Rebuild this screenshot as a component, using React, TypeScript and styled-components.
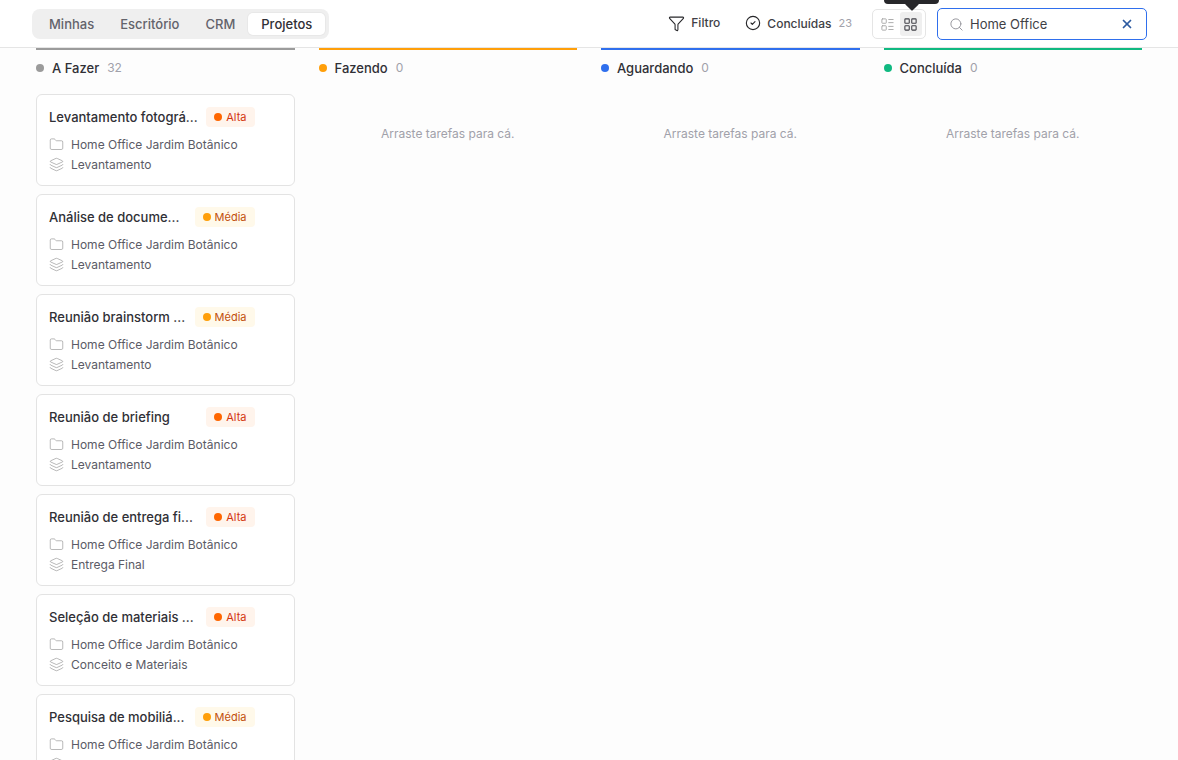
import { createGlobalStyle, styled } from 'styled-components';
import { CircleCheck, Folder, Funnel, Layers, LayoutGrid, LayoutList, Search, X } from 'lucide-react';

const Global = createGlobalStyle`
  html, body { margin: 0; padding: 0; height: 100%; overflow: hidden; background: #fdfdfd; }
  body { font-family: Inter, "Noto Sans", sans-serif; color: #27272a; }
  * { box-sizing: border-box; }
`;

const Page = styled.div`
  height: 760px;
  overflow: hidden;
  display: flex;
  flex-direction: column;
`;

const Header = styled.header`
  height: 48px;
  flex: none;
  display: flex;
  align-items: flex-start;
  padding: 8px 31px 0 32px;
  background: #fff;
  border-bottom: 1px solid #e5e5e5;
`;

const Tabs = styled.div`
  display: flex;
  align-items: center;
  height: 30px;
  margin-top: 1px;
  padding: 0 4px;
  border-radius: 8px;
  background: #efefef;
`;

const Tab = styled.div<{ $active?: boolean }>`
  height: 22px;
  padding: 0 13px;
  display: flex;
  align-items: center;
  border-radius: 5px;
  font-size: 13px;
  font-weight: 500;
  color: ${(p) => (p.$active ? '#303036' : '#63636b')};
  background: ${(p) => (p.$active ? '#fff' : 'transparent')};
  box-shadow: ${(p) => (p.$active ? '0 0 0 1px #e8e8e8' : 'none')};
`;

const Actions = styled.div`
  margin-left: auto;
  display: flex;
  align-items: flex-start;
`;

const ActionButton = styled.div<{ $gap: number; $right: number }>`
  height: 30px;
  display: flex;
  align-items: center;
  gap: ${(p) => p.$gap}px;
  margin-right: ${(p) => p.$right}px;
  font-size: 12px;
  font-weight: 500;
  color: #3f3f46;
  svg { color: #27272a; flex: none; }
`;

const FilterLabel = styled.span`
  margin-bottom: 2px;
`;

const Count = styled.span`
  color: #a1a1aa;
  font-size: 11px;
  font-weight: 400;
  margin-left: 1px;
`;

const ViewSwitch = styled.div`
  position: relative;
  width: 54px;
  height: 30px;
  margin: 1px 11px 0 0;
  display: flex;
  align-items: center;
  gap: 1px;
  padding: 0 3px;
  border: 1px solid #e5e5e5;
  border-radius: 5px;
  background: #fff;
`;

const ViewButton = styled.div<{ $active?: boolean }>`
  width: 24px;
  height: 24px;
  display: flex;
  align-items: center;
  justify-content: center;
  border-radius: 3px;
  color: ${(p) => (p.$active ? '#3f3f46' : '#a8a8a8')};
  background: ${(p) => (p.$active ? '#efefef' : 'transparent')};
`;

const Tooltip = styled.div`
  position: absolute;
  left: 11px;
  top: -30px;
  width: 55px;
  height: 24px;
  border-radius: 4px;
  background: #27272a;
  &::after {
    content: '';
    position: absolute;
    left: 23px;
    bottom: -5px;
    width: 10px;
    height: 10px;
    background: #27272a;
    transform: rotate(45deg);
    border-radius: 1px;
  }
`;

const SearchBox = styled.div`
  width: 210px;
  height: 32px;
  display: flex;
  align-items: center;
  padding: 0 12px 0 11px;
  border: 1px solid #2f6fed;
  border-radius: 5px;
  background: #fff;
  color: #98989f;
`;

const SearchText = styled.span`
  flex: 1;
  margin-left: 6px;
  font-size: 13px;
  color: #3f3f46;
`;

const Board = styled.main`
  flex: 1;
  display: grid;
  grid-template-columns: repeat(4, 1fr);
  gap: 24px;
  padding: 0 36px;
`;

const Column = styled.section<{ $color: string }>`
  border-top: 2px solid ${(p) => p.$color};
  min-width: 0;
`;

const ColumnHead = styled.div`
  height: 44px;
  display: flex;
  align-items: center;
  padding-bottom: 8px;
`;

const Dot = styled.span<{ $color: string; $size: number }>`
  width: ${(p) => p.$size}px;
  height: ${(p) => p.$size}px;
  flex: none;
  border-radius: 50%;
  background: ${(p) => p.$color};
`;

const ColumnTitle = styled.span`
  margin-left: 8px;
  font-size: 13px;
  font-weight: 500;
  color: #303036;
`;

const ColumnCount = styled.span`
  margin: 0 0 2px 8px;
  font-size: 12px;
  font-weight: 400;
  color: #a1a1aa;
`;

const CardList = styled.div`
  display: flex;
  flex-direction: column;
  gap: 8px;
`;

const Empty = styled.div`
  padding-top: 32px;
  text-align: center;
  font-size: 12px;
  color: #a1a1aa;
`;

const Card = styled.article`
  height: 92px;
  flex: none;
  padding: 12px 39px 0 12px;
  border: 1px solid #e3e3e3;
  border-radius: 6px;
  background: #fff;
`;

const CardTop = styled.div`
  height: 20px;
  display: flex;
  align-items: center;
  gap: 8px;
  margin-bottom: 7px;
`;

const CardTitle = styled.div`
  flex: 1;
  min-width: 0;
  white-space: nowrap;
  font-size: 13px;
  font-weight: 500;
  color: #303036;
`;

const Badge = styled.span<{ $bg: string; $fg: string }>`
  height: 20px;
  flex: none;
  display: flex;
  align-items: center;
  gap: 4px;
  padding: 0 8px;
  border-radius: 4px;
  font-size: 11px;
  font-weight: 400;
  color: ${(p) => p.$fg};
  background: ${(p) => p.$bg};
`;

const Meta = styled.div`
  height: 20px;
  display: flex;
  align-items: center;
  gap: 7px;
  font-size: 12px;
  color: #5b5b66;
  svg { color: #8f8f8f; flex: none; }
`;

const priorities = {
  alta: { label: 'Alta', dot: '#ff6600', bg: '#fff4ec', fg: '#d4360f' },
  media: { label: 'Média', dot: '#ff9f0a', bg: '#fff9ea', fg: '#c2500c' },
};

const tasks: { title: string; priority: 'alta' | 'media'; phase: string }[] = [
  { title: 'Levantamento fotográ...', priority: 'alta', phase: 'Levantamento' },
  { title: 'Análise de docume...', priority: 'media', phase: 'Levantamento' },
  { title: 'Reunião brainstorm ...', priority: 'media', phase: 'Levantamento' },
  { title: 'Reunião de briefing', priority: 'alta', phase: 'Levantamento' },
  { title: 'Reunião de entrega fi...', priority: 'alta', phase: 'Entrega Final' },
  { title: 'Seleção de materiais ...', priority: 'alta', phase: 'Conceito e Materiais' },
  { title: 'Pesquisa de mobiliá...', priority: 'media', phase: 'Levantamento' },
];

const columns = [
  { name: 'A Fazer', color: '#9b9b9b', count: 32 },
  { name: 'Fazendo', color: '#ff9f0a', count: 0 },
  { name: 'Aguardando', color: '#2f6fed', count: 0 },
  { name: 'Concluída', color: '#10b981', count: 0 },
];

export default function App() {
  return (
    <Page>
      <Global />
      <Header>
        <Tabs>
          <Tab>Minhas</Tab>
          <Tab>Escritório</Tab>
          <Tab>CRM</Tab>
          <Tab $active>Projetos</Tab>
        </Tabs>
        <Actions>
          <ActionButton $gap={6} $right={25}>
            <Funnel size={17} strokeWidth={1.5} />
            <FilterLabel>Filtro</FilterLabel>
          </ActionButton>
          <ActionButton $gap={6} $right={20}>
            <CircleCheck size={16} strokeWidth={1.7} />
            Concluídas <Count>23</Count>
          </ActionButton>
          <ViewSwitch>
            <Tooltip />
            <ViewButton>
              <LayoutList size={15} strokeWidth={1.5} />
            </ViewButton>
            <ViewButton $active>
              <LayoutGrid size={15} strokeWidth={1.7} />
            </ViewButton>
          </ViewSwitch>
          <SearchBox>
            <Search size={15} strokeWidth={1.6} />
            <SearchText>Home Office</SearchText>
            <X size={14} strokeWidth={3} color="#2c5aa0" />
          </SearchBox>
        </Actions>
      </Header>
      <Board>
        {columns.map((col) => (
          <Column key={col.name} $color={col.color}>
            <ColumnHead>
              <Dot $color={col.color} $size={8} />
              <ColumnTitle>{col.name}</ColumnTitle>
              <ColumnCount>{col.count}</ColumnCount>
            </ColumnHead>
            {col.count > 0 ? (
              <CardList>
                {tasks.map((task) => {
                  const pr = priorities[task.priority];
                  return (
                    <Card key={task.title}>
                      <CardTop>
                        <CardTitle>{task.title}</CardTitle>
                        <Badge $bg={pr.bg} $fg={pr.fg}>
                          <Dot $color={pr.dot} $size={8} />
                          {pr.label}
                        </Badge>
                      </CardTop>
                      <Meta>
                        <Folder size={15} strokeWidth={1} />
                        Home Office Jardim Botânico
                      </Meta>
                      <Meta>
                        <Layers size={15} strokeWidth={1} />
                        {task.phase}
                      </Meta>
                    </Card>
                  );
                })}
              </CardList>
            ) : (
              <Empty>Arraste tarefas para cá.</Empty>
            )}
          </Column>
        ))}
      </Board>
    </Page>
  );
}
